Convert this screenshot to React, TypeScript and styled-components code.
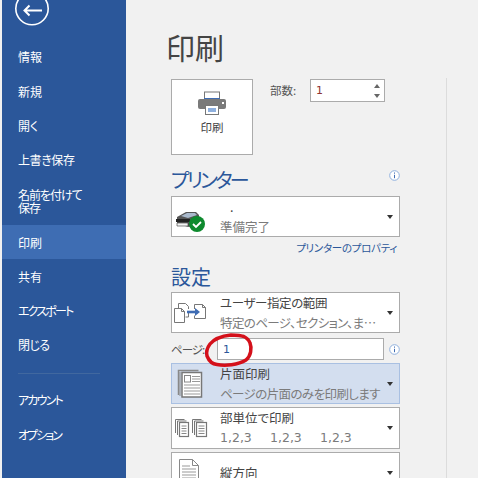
import React from "react";
import styled, { createGlobalStyle } from "styled-components";

const Global = createGlobalStyle`
  html, body { margin: 0; padding: 0; width: 478px; height: 478px; overflow: hidden; background: #f1f1f1; }
  body { font-family: "Noto Sans CJK JP", "Liberation Sans", sans-serif; font-feature-settings: "palt"; }
`;

const Page = styled.div`
  position: relative;
  display: flex;
  width: 478px;
  height: 478px;
  overflow: hidden;
  background: #f1f1f1;
`;
const Sidebar = styled.nav`
  flex: none;
  width: 124px;
  height: 478px;
  margin-left: 2px;
  background: #2b579a;
  color: #fff;
  display: flex;
  flex-direction: column;
`;
const BackWrap = styled.div`
  height: 40px;
  padding-left: 13px;
`;
const NavItem = styled.div<{ $active?: boolean; $tall?: boolean; $track?: number }>`
  box-sizing: border-box;
  height: ${(p) => (p.$tall ? "48px" : "34.3px")};
  padding: 0 0 0 16px;
  display: flex;
  align-items: center;
  font-size: 12px;
  line-height: 13.5px;
  letter-spacing: ${(p) => p.$track ?? 0}px;
  background: ${(p) => (p.$active ? "#3e6db3" : "transparent")};
`;
const NavRule = styled.div`
  height: 1px;
  width: 82px;
  margin: 10.500px 0 9px 16px;
  background: #41689f;
`;
const Main = styled.main`
  flex: 1;
  position: relative;
  padding: 29px 0 0 42px;
`;
const Title = styled.h1`
  margin: 0 0 14px -2px;
  font-size: 29px;
  line-height: 36px;
  font-weight: 400;
  color: #444;
`;
const Column = styled.div`
  width: 229px;
  margin-left: 3px;
  display: flex;
  flex-direction: column;
`;
const TopRow = styled.div`
  display: flex;
  align-items: flex-start;
`;
const PrintButton = styled.div`
  box-sizing: border-box;
  width: 82px;
  height: 76px;
  background: #fff;
  border: 1px solid #ababab;
  display: flex;
  flex-direction: column;
  align-items: center;
  padding-top: 11px;
  font-size: 11.500px;
  line-height: 14px;
  color: #444;
  gap: 5px;
`;
const CopiesLabel = styled.span`
  margin: 2px 0 0 17px;
  width: 40px;
  font-size: 11.500px;
  line-height: 18px;
  color: #555;
`;
const Spin = styled.div`
  box-sizing: border-box;
  width: 75px;
  height: 23px;
  background: #fff;
  border: 1px solid #ababab;
  padding-left: 5px;
  display: flex;
  align-items: center;
  justify-content: space-between;
  font-family: "DejaVu Sans", sans-serif;
  font-size: 11px;
  color: #8e3434;
`;
const SpinArrows = styled.div`
  display: flex;
  flex-direction: column;
  gap: 6px;
  margin-right: 4px;
`;
const Arrow = styled.i<{ $up?: boolean }>`
  width: 0;
  height: 0;
  border-left: 3.500px solid transparent;
  border-right: 3.500px solid transparent;
  ${(p) => (p.$up ? "border-bottom: 4px solid #666;" : "border-top: 4px solid #666;")}
`;
const HeadingRow = styled.div<{ $top: number }>`
  margin-top: ${(p) => p.$top}px;
  height: 26px;
  display: flex;
  align-items: center;
  justify-content: space-between;
`;
const Heading = styled.h2<{ $track?: number }>`
  margin: 0;
  font-size: 20px;
  line-height: 26px;
  font-weight: 400;
  color: #2b579a;
  letter-spacing: ${(p) => p.$track ?? 0}px;
`;
const Drop = styled.div<{ $hi?: boolean; $gap?: number; $h?: number }>`
  box-sizing: border-box;
  width: 229px;
  height: ${(p) => p.$h ?? 41}px;
  margin-top: ${(p) => p.$gap ?? 3}px;
  flex: none;
  display: flex;
  align-items: center;
  background: ${(p) => (p.$hi ? "#d3deef" : "#fff")};
  border: 1px solid ${(p) => (p.$hi ? "#a9c0e2" : "#ababab")};
`;
const DropIcon = styled.div<{ $pad: number; $drop?: number }>`
  box-sizing: border-box;
  width: 48px;
  flex: none;
  display: flex;
  padding-left: ${(p) => p.$pad}px;
  margin-top: ${(p) => p.$drop ?? 0}px;
`;
const DropText = styled.div`
  flex: 1;
  min-width: 0;
  display: flex;
  flex-direction: column;
  gap: 6px;
`;
const Line1 = styled.div<{ $indent?: number; $track?: number }>`
  font-size: 12.500px;
  line-height: 14px;
  color: #444;
  white-space: nowrap;
  padding-left: ${(p) => p.$indent ?? 0}px;
  letter-spacing: ${(p) => p.$track ?? 0}px;
`;
const Line2 = styled.div<{ $track?: number }>`
  font-size: 12.500px;
  line-height: 14px;
  color: #7b7b7b;
  white-space: nowrap;
  letter-spacing: ${(p) => p.$track ?? 0}px;
`;
const Digits = styled.div`
  display: flex;
  font-family: "DejaVu Sans", sans-serif;
  font-size: 12.500px;
  line-height: 14px;
  color: #7b7b7b;
`;
const DigitGroup = styled.span`
  width: 50px;
  flex: none;
`;
const Caret = styled.i`
  flex: none;
  width: 0;
  height: 0;
  margin: 0 6px 0 4px;
  border-left: 3.500px solid transparent;
  border-right: 3.500px solid transparent;
  border-top: 4px solid #333;
`;
const LinkRow = styled.div`
  margin-top: 3px;
  height: 16px;
  padding-right: 3px;
  text-align: right;
  font-size: 10.500px;
  letter-spacing: -0.3px;
  line-height: 16px;
  color: #2b579a;
`;
const PageRow = styled.div`
  height: 22px;
  margin-top: 5px;
  display: flex;
  align-items: center;
`;
const PageLabel = styled.span`
  width: 46px;
  flex: none;
  font-size: 11.500px;
  letter-spacing: -1px;
  color: #555;
`;
const PageInput = styled.div`
  box-sizing: border-box;
  width: 168px;
  height: 22px;
  background: #fff;
  border: 1px solid #ababab;
  padding-left: 5px;
  display: flex;
  align-items: center;
  font-family: "DejaVu Sans", sans-serif;
  font-size: 11px;
  color: #2b579a;
`;
const Info = styled.span<{ $lift?: number }>`
  margin-left: 5px;
  display: flex;
  margin-top: ${(p) => -(p.$lift ?? 0)}px;
`;
const Divider = styled.div`
  position: absolute;
  left: 320px;
  top: 78px;
  bottom: 0;
  width: 1px;
  background: #dcdcdc;
`;
const Annotation = styled.svg`
  position: absolute;
  left: 0;
  top: 0;
  pointer-events: none;
`;

const BackIcon = () => (
  <svg width="36" height="30" viewBox="0 0 36 30">
    <circle cx="17" cy="8.500" r="16.200" fill="none" stroke="#fff" strokeWidth="1.600" />
    <path d="M9.500 10.500H27M14.500 5.500l-5 5 5 5" fill="none" stroke="#fff" strokeWidth="2" />
  </svg>
);
const PrinterIcon = () => (
  <svg width="30" height="24" viewBox="0 0 30 24">
    <rect x="7.500" y="1" width="15" height="9" fill="#fff" stroke="#777" />
    <path d="M7 7h16v3H7z" fill="#3f6cb3" />
    <rect x="1" y="8" width="28" height="10" rx="2" fill="#7a7a7a" />
    <rect x="8.500" y="14.500" width="13" height="9" fill="#fff" stroke="#777" />
    <rect x="11" y="17" width="8" height="4" fill="#8fb0de" />
    <rect x="25" y="11" width="2" height="2" fill="#fff" />
  </svg>
);
const StatusPrinter = () => (
  <svg width="32" height="24" viewBox="0 0 32 24">
    <path d="M2 9l9-5h10l3 3v9l-10 3-12-3z" fill="#555" />
    <path d="M6 8l6-3h8l2 2-9 3z" fill="#a9b9cc" />
    <path d="M1 11h14v3H1z" fill="#222" />
    <path d="M2 15h11v3H2z" fill="#f4f4f4" stroke="#333" strokeWidth=".6" />
    <circle cx="22" cy="16" r="8" fill="#0e8a2e" />
    <path d="M18 16l3 3 5-5" fill="none" stroke="#fff" strokeWidth="1.800" />
  </svg>
);
const RangeIcon = () => (
  <svg width="34" height="22" viewBox="0 0 34 22">
    <g fill="none" stroke="#777">
      <path d="M5.500 6V1.500h7l3 3V7M15.500 11v4h-3" />
      <path d="M1.500 6.500h7l3 3v11h-10zM8.500 6.500v3h3" />
      <path d="M21.500 7V2.500h8l3 3v11h-11v-3M29.500 2.500v3h3" />
    </g>
    <path d="M14 10h11" fill="none" stroke="#3f6cb3" strokeWidth="2.600" />
    <path d="M22 6l5 4-5 4z" fill="#3f6cb3" />
  </svg>
);
const SidedIcon = () => (
  <svg width="26" height="29" viewBox="0 0 26 29">
    <path d="M1.500 26V1.500h20" fill="none" stroke="#888" strokeWidth="1.500" />
    <path d="M3 27V3" stroke="#888" />
    <rect x="5" y="3.500" width="19.500" height="24.500" fill="#fff" stroke="#777" strokeWidth="1.500" />
    <rect x="7.500" y="6.500" width="6" height="6.500" fill="#fff" stroke="#888" />
    <path d="M15 7.500h8M15 10h8M15 12.500h8M7 16h16M7 19h16M7 22h16M7 25h16" stroke="#999" />
  </svg>
);
const CollateIcon = () => (
  <svg width="34" height="20" viewBox="0 0 34 20">
    <g fill="none" stroke="#777">
      <path d="M1.500 15V1.500h9M3.500 17V3h9" />
      <rect x="5.500" y="4.500" width="9" height="14" strokeWidth="1.200" />
      <path d="M18.500 15V1.500h9M20.500 17V3h9" />
      <rect x="22.500" y="4.500" width="10" height="14" strokeWidth="1.200" />
    </g>
    <path d="M7.500 8h5M7.500 10.500h5M7.500 13h5M7.500 15.500h5M24.500 8h6M24.500 10.500h6M24.500 13h6M24.500 15.500h6" stroke="#888" />
  </svg>
);
const PortraitIcon = () => (
  <svg width="22" height="30" viewBox="0 0 22 30">
    <path d="M1.500 1.500h13l6 6v21h-19zM14.500 1.500v6h6" fill="#fff" stroke="#888" />
    <path d="M4 8h8M4 11h14M4 14h14M4 17h14M4 20h14M4 23h14" stroke="#999" />
  </svg>
);
const InfoIcon = () => (
  <svg width="11" height="11" viewBox="0 0 11 11">
    <circle cx="5.500" cy="5.500" r="4.800" fill="#fff" stroke="#8fb0de" />
    <path d="M5.500 2.500v1.200M5.500 4.800v3.400" stroke="#3f6cb3" />
  </svg>
);

const nav1 = [
  { label: "情報", track: 0 },
  { label: "新規", track: 0 },
  { label: "開く", track: 0 },
  { label: "上書き保存", track: -0.4 },
];
const nav2 = [
  { label: "共有", track: 0 },
  { label: "エクスポート", track: -1.8 },
  { label: "閉じる", track: -0.6 },
];

export default function App() {
  return (
    <Page>
      <Global />
      <Sidebar>
        <BackWrap><BackIcon /></BackWrap>
        {nav1.map((n) => <NavItem key={n.label} $track={n.track}>{n.label}</NavItem>)}
        <NavItem $tall $track={-1}>名前を付けて<br />保存</NavItem>
        <NavItem $active>印刷</NavItem>
        {nav2.map((n) => <NavItem key={n.label} $track={n.track}>{n.label}</NavItem>)}
        <NavRule />
        <NavItem $track={-1.8}>アカウント</NavItem>
        <NavItem $track={-2}>オプション</NavItem>
      </Sidebar>
      <Main>
        <Title>印刷</Title>
        <Column>
          <TopRow>
            <PrintButton><PrinterIcon />印刷</PrintButton>
            <CopiesLabel>部数:</CopiesLabel>
            <Spin>1<SpinArrows><Arrow $up /><Arrow /></SpinArrows></Spin>
          </TopRow>
          <HeadingRow $top={12}>
            <Heading $track={-2.8}>プリンター</Heading>
            <Info $lift={10}><InfoIcon /></Info>
          </HeadingRow>
          <Drop>
            <DropIcon $pad={3} $drop={7}><StatusPrinter /></DropIcon>
            <DropText>
              <Line1 $indent={10}>.</Line1>
              <Line2>準備完了</Line2>
            </DropText>
            <Caret />
          </Drop>
          <LinkRow>プリンターのプロパティ</LinkRow>
          <HeadingRow $top={8}><Heading>設定</Heading></HeadingRow>
          <Drop $gap={2}>
            <DropIcon $pad={1}><RangeIcon /></DropIcon>
            <DropText>
              <Line1 $track={-0.4}>ユーザー指定の範囲</Line1>
              <Line2 $track={-0.6}>特定のページ、セクション、ま…</Line2>
            </DropText>
            <Caret />
          </Drop>
          <PageRow>
            <PageLabel>ページ:</PageLabel>
            <PageInput>1</PageInput>
            <Info><InfoIcon /></Info>
          </PageRow>
          <Drop $hi>
            <DropIcon $pad={5}><SidedIcon /></DropIcon>
            <DropText>
              <Line1>片面印刷</Line1>
              <Line2 $track={-0.6}>ページの片面のみを印刷します</Line2>
            </DropText>
            <Caret />
          </Drop>
          <Drop $h={42}>
            <DropIcon $pad={2}><CollateIcon /></DropIcon>
            <DropText>
              <Line1>部単位で印刷</Line1>
              <Digits>
                <DigitGroup>1,2,3</DigitGroup>
                <DigitGroup>1,2,3</DigitGroup>
                <DigitGroup>1,2,3</DigitGroup>
              </Digits>
            </DropText>
            <Caret />
          </Drop>
          <Drop>
            <DropIcon $pad={6}><PortraitIcon /></DropIcon>
            <DropText>
              <Line1>縦方向</Line1>
            </DropText>
            <Caret />
          </Drop>
        </Column>
        <Divider />
      </Main>
      <Annotation width="478" height="478" viewBox="0 0 478 478">
        <path
          d="M245 337C240 335 236 335 231 335C222 336 214 339 210 344C207 348 206 352 207 356C209 361 212 364 217 364.500C225 366 238 365 246 360C251 356 252 348 250 343C249 340 247 338 243 336"
          fill="none"
          stroke="#d4101a"
          strokeWidth="3.500"
        />
      </Annotation>
    </Page>
  );
}
